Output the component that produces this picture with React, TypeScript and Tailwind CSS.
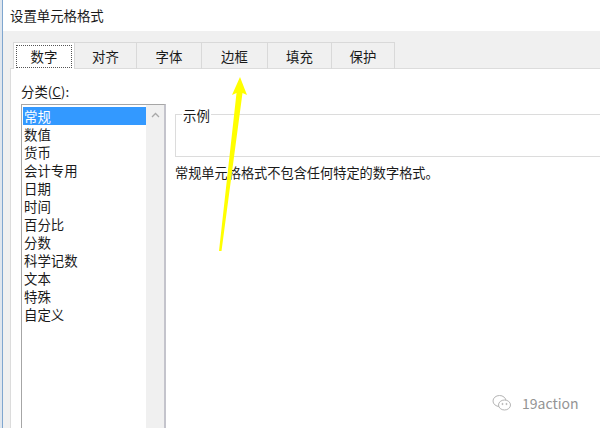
const tabs = [
  { label: "数字", w: "w-[62px]", active: true },
  { label: "对齐", w: "w-[62px]" },
  { label: "字体", w: "w-[65px]" },
  { label: "边框", w: "w-[66px]" },
  { label: "填充", w: "w-[64px]" },
  { label: "保护", w: "w-[63px]" },
];

const categories = [
  "常规",
  "数值",
  "货币",
  "会计专用",
  "日期",
  "时间",
  "百分比",
  "分数",
  "科学记数",
  "文本",
  "特殊",
  "自定义",
];

function Arrow() {
  return (
    <svg className="absolute left-0 top-0 pointer-events-none" width="600" height="428">
      <polygon
        points="240,77 247,95 242.5,93 221.5,251 219,251 236.5,93 232,95"
        fill="#ffff00"
      />
    </svg>
  );
}

function Watermark() {
  return (
    <div className="absolute left-[492px] top-[394px] flex items-center gap-[10px]">
      <svg width="20" height="18" viewBox="0 0 20 18" fill="none" stroke="#b5b5b5" strokeWidth="1">
        <ellipse cx="7.5" cy="7" rx="6.5" ry="5.5" />
        <ellipse cx="12.5" cy="11" rx="6" ry="5" fill="white" />
        <circle cx="10.5" cy="10" r="0.6" fill="#b5b5b5" />
        <circle cx="14.5" cy="10" r="0.6" fill="#b5b5b5" />
      </svg>
      <span className="text-[14px] text-[#949494] leading-none">19action</span>
    </div>
  );
}

export default function App() {
  return (
    <div
      className="relative w-[600px] h-[428px] overflow-hidden bg-white flex text-[#1a1a1a]"
      style={{ fontFamily: '"Noto Sans CJK SC", "Liberation Sans", sans-serif' }}
    >
      <div className="w-[3px] bg-[#dfe6ee] border-r border-[#7fa6cf]" />
      <div className="flex-1 flex flex-col">
        <div className="h-[31px] pl-[7px] flex items-center text-[13.4px] bg-white">设置单元格格式</div>
        <div className="flex-1 bg-[#f0f0f0] pl-[7px] flex flex-col">
          <div className="h-[38px] pt-[11px] pl-[3px] flex border-b border-[#dcdcdc]">
            {tabs.map((t) =>
              t.active ? (
                <div
                  key={t.label}
                  className={`${t.w} h-[28px] bg-white border border-b-0 border-[#d9d9d9] p-[2px] -mb-px`}
                >
                  <div className="h-full border border-dotted border-[#555] flex items-center justify-center text-[13.4px]">
                    {t.label}
                  </div>
                </div>
              ) : (
                <div
                  key={t.label}
                  className={`${t.w} h-[27px] border border-l-0 border-b-0 border-[#d9d9d9] flex items-center justify-center text-[13.4px]`}
                >
                  {t.label}
                </div>
              )
            )}
          </div>
          <div className="flex-1 bg-white border-l border-[#dcdcdc] pl-[10px] flex">
            <div className="flex flex-col pt-[13px]">
              <div className="text-[13.4px] leading-[18px] h-[22px]">
                分类(<span className="underline">C</span>):
              </div>
              <div className="flex-1 w-[145px] border-l border-t border-[#a6a6a6] border-r-2 border-r-[#c4c4cc] flex">
                <div className="flex-1 pt-[2px] pl-px">
                  {categories.map((c, i) => (
                    <div
                      key={c}
                      className={`h-[18px] pl-px text-[13.4px] leading-[18px] ${
                        i === 0 ? "bg-[#3399ff] text-white" : ""
                      }`}
                    >
                      {c}
                    </div>
                  ))}
                </div>
                <div className="w-[18px] bg-[#f0f0f0] flex justify-center pt-[7px]">
                  <svg width="9" height="6" viewBox="0 0 9 6" fill="none" stroke="#a8a8a8" strokeWidth="1.3">
                    <polyline points="1,5 4.5,1.5 8,5" />
                  </svg>
                </div>
              </div>
            </div>
            <div className="flex-1 pl-[9px] pt-[45px]">
              <div className="relative h-[43px] border border-[#dcdcdc] border-r-0">
                <span className="absolute left-[6px] -top-[9px] bg-white px-px text-[13.4px] leading-[18px]">示例</span>
              </div>
              <div className="mt-[7px] text-[13.2px] leading-[18px]">常规单元格格式不包含任何特定的数字格式。</div>
            </div>
          </div>
        </div>
      </div>
      <Arrow />
      <Watermark />
    </div>
  );
}
